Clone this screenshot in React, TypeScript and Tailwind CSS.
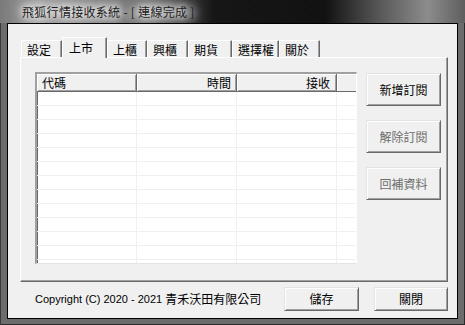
import React from 'react'

const CJK = "font-['Noto_Sans_CJK_TC','Noto_Sans',sans-serif]"
const LATIN = "font-['Liberation_Sans','Noto_Sans_CJK_TC',sans-serif]"

const tabs = [
  { label: '設定', w: 'w-[41px]' },
  { label: '上市', w: 'w-[45px]', active: true },
  { label: '上櫃', w: 'w-[40px]' },
  { label: '興櫃', w: 'w-[41px]' },
  { label: '期貨', w: 'w-[44px]' },
  { label: '選擇權', w: 'w-[47px]' },
  { label: '關於', w: 'w-[41px]' },
]

const ROWS = 12

function WinButton({
  children,
  disabled,
  className,
}: {
  children: React.ReactNode
  disabled?: boolean
  className: string
}): JSX.Element {
  return (
    <button
      disabled={disabled}
      className={`${className} shrink-0 ${CJK} text-[12px] leading-none flex items-center justify-center bg-[#f0f0f0] border border-t-[#e3e3e3] border-l-[#e3e3e3] border-r-[#696969] border-b-[#696969] shadow-[inset_1px_1px_#fff,inset_-1px_-1px_#a0a0a0] ${
        disabled ? 'text-[#6d6d6d]' : 'text-black'
      }`}
    >
      {children}
    </button>
  )
}

export default function App(): JSX.Element {
  return (
    <div className="w-[465px] h-[325px] flex flex-col bg-[#6c6c6c] shadow-[inset_1px_0_#3a3a3a,inset_-1px_-1px_#2a2a2a] overflow-hidden">
      {/* title bar */}
      <div className="h-[23px] flex items-center pl-[22px] bg-[linear-gradient(90deg,#7a7a7a_0%,#9a9a9a_8%,#6a6a6a_32%,#161616_46%,#121212_70%,#5a5a5a_82%,#8c8c8c_92%,#5e5e5e_100%)]">
        <span
          className={`${CJK} text-[12px] leading-none tracking-[0.3px] text-[#1c1c1c] [text-shadow:0_0_6px_#fff,0_0_10px_#fff,0_0_14px_#fff,0_0_18px_#ddd]`}
        >
          飛狐行情接收系統 - [ 連線完成 ]
        </span>
      </div>

      {/* client area */}
      <div className="mx-[7px] h-[296px] border border-black bg-[#f0f0f0] flex flex-col">
        {/* tab strip */}
        <div className="mt-[13px] ml-[13px] h-[20px] flex items-end">
          {tabs.map((t) =>
            t.active ? (
              <div
                key={t.label}
                className={`${t.w} h-[21px] -mb-px relative z-10 bg-[#f0f0f0] border-t border-l border-r border-t-white border-l-white border-r-[#696969] shadow-[inset_-1px_0_#a0a0a0] pl-[6px] pt-[3px] ${CJK} text-[12px] leading-[14px] text-black`}
              >
                {t.label}
              </div>
            ) : (
              <div
                key={t.label}
                className={`${t.w} h-[17px] bg-[#f0f0f0] border-t border-l border-r border-t-white border-l-white border-r-[#696969] shadow-[inset_-1px_0_#a0a0a0] pl-[5px] pt-[2px] ${CJK} text-[12px] leading-[14px] text-black`}
              >
                {t.label}
              </div>
            )
          )}
        </div>

        {/* tab panel */}
        <div className="ml-[12px] w-[428px] h-[225px] border border-t-white border-l-white border-r-[#696969] border-b-[#696969] shadow-[inset_-1px_-1px_#a0a0a0] flex items-start pl-[14px] pt-[14px]">
          {/* list view */}
          <div className="w-[322px] h-[192px] shrink-0 border-t-2 border-l-2 border-r border-b border-t-[#a0a0a0] border-l-[#a0a0a0] border-r-white border-b-[#e3e3e3] shadow-[inset_1px_1px_#696969] bg-white flex flex-col overflow-hidden">
            <div className={`h-[18px] shrink-0 flex bg-[#f0f0f0] ${CJK} text-[12px] leading-none text-black`}>
              <div className="w-[100px] h-full flex items-center pl-[5px] border-r border-b border-[#696969] shadow-[inset_1px_1px_#fff,inset_-1px_-1px_#a0a0a0]">
                代碼
              </div>
              <div className="w-[100px] h-full flex items-center justify-end pr-[5px] border-r border-b border-[#696969] shadow-[inset_1px_1px_#fff,inset_-1px_-1px_#a0a0a0]">
                時間
              </div>
              <div className="w-[100px] h-full flex items-center justify-end pr-[6px] border-r border-b border-[#696969] shadow-[inset_1px_1px_#fff,inset_-1px_-1px_#a0a0a0]">
                接收
              </div>
              <div className="flex-1 h-full border-b border-[#696969] shadow-[inset_1px_1px_#fff]" />
            </div>
            {Array.from({ length: ROWS }).map((_, i) => (
              <div key={i} className="h-[14px] shrink-0 flex border-b border-[#f0f0f0]">
                <div className="w-[100px] border-r border-[#f0f0f0]" />
                <div className="w-[100px] border-r border-[#f0f0f0]" />
                <div className="w-[100px] border-r border-[#f0f0f0]" />
                <div className="flex-1" />
              </div>
            ))}
            <div className="flex-1 flex">
              <div className="w-[100px] border-r border-[#f0f0f0]" />
              <div className="w-[100px] border-r border-[#f0f0f0]" />
              <div className="w-[100px] border-r border-[#f0f0f0]" />
            </div>
          </div>

          {/* side buttons */}
          <div className="ml-[9px] mt-[1px] flex flex-col gap-[14px] shrink-0">
            <WinButton className="w-[75px] h-[33px]">新增訂閱</WinButton>
            <WinButton className="w-[75px] h-[33px]" disabled>
              解除訂閱
            </WinButton>
            <WinButton className="w-[75px] h-[33px]" disabled>
              回補資料
            </WinButton>
          </div>
        </div>

        {/* bottom row */}
        <div className="mt-[5px] flex items-center pl-[27px] pr-[9px]">
          <span className="flex-1 flex items-center leading-none text-black">
            <span className={`${LATIN} text-[11px]`}>Copyright (C) 2020 - 2021&nbsp;</span>
            <span className={`${CJK} text-[12px]`}>青禾沃田有限公司</span>
          </span>
          <WinButton className="w-[75px] h-[24px]">儲存</WinButton>
          <WinButton className="w-[74px] h-[24px] ml-[15px]">關閉</WinButton>
        </div>
      </div>
    </div>
  )
}
